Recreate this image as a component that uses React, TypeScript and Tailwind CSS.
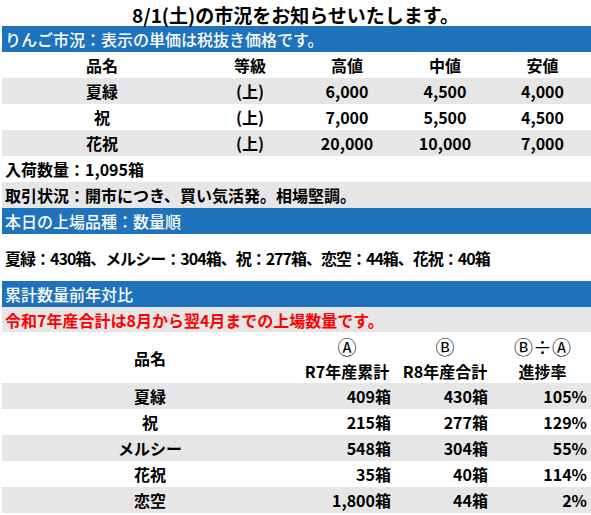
const font = { fontFamily: '"Noto Sans CJK JP", "Noto Sans", sans-serif' };

const prices = [
  { name: "夏緑", grade: "(上)", high: "6,000", mid: "4,500", low: "4,000" },
  { name: "祝", grade: "(上)", high: "7,000", mid: "5,500", low: "4,500" },
  { name: "花祝", grade: "(上)", high: "20,000", mid: "10,000", low: "7,000" },
];

const totals = [
  { name: "夏緑", a: "409箱", b: "430箱", r: "105%" },
  { name: "祝", a: "215箱", b: "277箱", r: "129%" },
  { name: "メルシー", a: "548箱", b: "304箱", r: "55%" },
  { name: "花祝", a: "35箱", b: "40箱", r: "114%" },
  { name: "恋空", a: "1,800箱", b: "44箱", r: "2%" },
];

function Bar({ children }: { children: React.ReactNode }) {
  return (
    <div className="h-[26px] bg-[#1f72bc] text-white text-[16px] font-medium flex items-center pl-[3px] leading-none">
      {children}
    </div>
  );
}

export default function App() {
  return (
    <div className="w-[591px] h-[515px] bg-white text-black overflow-hidden" style={font}>
      <div className="h-[26px] flex items-center justify-center text-[19px] font-bold leading-none pt-[2px]">
        8/1(土)の市況をお知らせいたします。
      </div>

      <div className="pl-[2px]">
        <Bar>りんご市況：表示の単価は税抜き価格です。</Bar>

        <div className="grid grid-cols-[200px_96px_98px_98px_1fr] text-[16px] font-bold leading-none">
          {["品名", "等級", "高値", "中値", "安値"].map((h) => (
            <div key={h} className="h-[26px] flex items-center justify-center">
              {h}
            </div>
          ))}
          {prices.map((p, i) => {
            const bg = i % 2 === 0 ? "bg-[#e6e6e6]" : "bg-white";
            return [p.name, p.grade, p.high, p.mid, p.low].map((v, j) => (
              <div key={`${i}-${j}`} className={`h-[26px] flex items-center justify-center ${bg}`}>
                {v}
              </div>
            ));
          })}
        </div>

        <div className="h-[26px] flex items-center pl-[3px] text-[16px] font-bold leading-none">
          入荷数量：1,095箱
        </div>
        <div className="h-[26px] flex items-center pl-[3px] text-[16px] font-bold leading-none bg-[#e6e6e6]">
          取引状況：開市につき、買い気活発。相場堅調。
        </div>

        <Bar>本日の上場品種：数量順</Bar>
        <div className="h-[47px] flex items-center pl-[3px] text-[16px] font-bold leading-none tracking-[-1px]">
          夏緑：430箱、メルシー：304箱、祝：277箱、恋空：44箱、花祝：40箱
        </div>

        <Bar>累計数量前年対比</Bar>
        <div className="h-[25px] flex items-center pl-[3px] text-[16px] font-bold leading-none bg-[#e6e6e6] text-[#ff0000]">
          令和7年産合計は8月から翌4月までの上場数量です。
        </div>

        <div className="grid grid-cols-[296px_98px_98px_1fr] text-[16px] font-bold leading-none">
          <div className="h-[51px] flex items-center justify-center">品名</div>
          <div className="h-[51px] flex flex-col items-center justify-center gap-[7px]">
            <span className="font-normal text-[19px]">Ⓐ</span>
            <span>R7年産累計</span>
          </div>
          <div className="h-[51px] flex flex-col items-center justify-center gap-[7px]">
            <span className="font-normal text-[19px]">Ⓑ</span>
            <span>R8年産合計</span>
          </div>
          <div className="h-[51px] flex flex-col items-center justify-center gap-[7px]">
            <span className="font-normal text-[19px]">Ⓑ÷Ⓐ</span>
            <span>進捗率</span>
          </div>
          {totals.map((t, i) => {
            const bg = i % 2 === 0 ? "bg-[#e6e6e6]" : "bg-white";
            return [
              <div key={`${i}n`} className={`h-[26px] flex items-center justify-center ${bg}`}>{t.name}</div>,
              <div key={`${i}a`} className={`h-[26px] flex items-center justify-end pr-[5px] ${bg}`}>{t.a}</div>,
              <div key={`${i}b`} className={`h-[26px] flex items-center justify-end pr-[6px] ${bg}`}>{t.b}</div>,
              <div key={`${i}r`} className={`h-[26px] flex items-center justify-end pr-[4px] ${bg}`}>{t.r}</div>,
            ];
          })}
        </div>
      </div>
    </div>
  );
}
